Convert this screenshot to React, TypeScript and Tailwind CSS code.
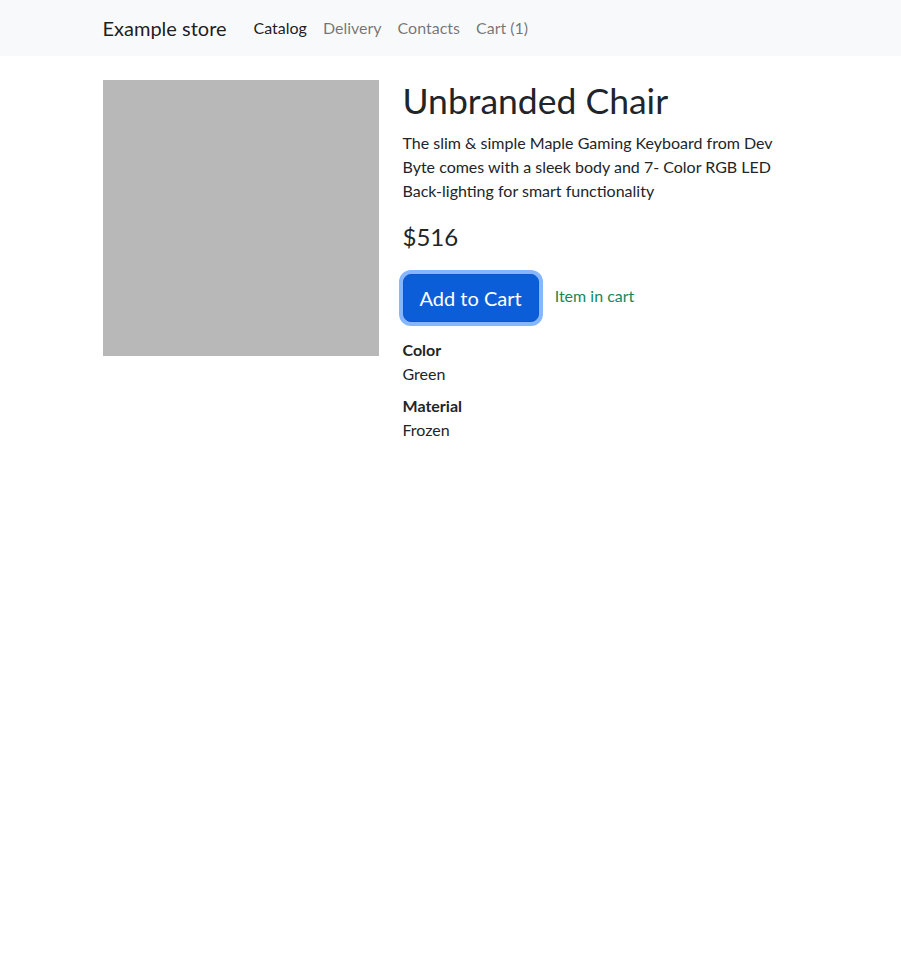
export default function App() {
  return (
    <div className="min-h-screen bg-white text-[#212529]" style={{ fontFamily: "Lato, 'Noto Sans', sans-serif" }}>
      <nav className="h-[56px] bg-[#f8f9fa] flex items-center">
        <div className="w-[720px] mx-auto px-3 flex items-center">
          <span className="text-[20px] leading-[30px] text-black/90 mr-[19px]">Example store</span>
          <ul className="flex items-center text-[16px] leading-[24px]">
            <li className="px-2 text-black/90">Catalog</li>
            <li className="px-2 text-black/55">Delivery</li>
            <li className="px-2 text-black/55">Contacts</li>
            <li className="px-2 text-black/55">Cart (1)</li>
          </ul>
        </div>
      </nav>
      <main className="w-[720px] mx-auto px-3 mt-6 flex gap-6 items-start">
        <div className="w-[276px] h-[276px] bg-[#b8b8b8] shrink-0" />
        <div className="w-[396px]">
          <h1 className="text-[35.5px] leading-[42.6px] font-normal mb-2">Unbranded Chair</h1>
          <p className="text-[16px] leading-[24px] mb-4">
            The slim &amp; simple Maple Gaming Keyboard from Dev Byte comes with a sleek body and 7- Color RGB LED Back-lighting for smart functionality
          </p>
          <p className="text-[24px] leading-[36px] mb-[19px]">$516</p>
          <div className="flex items-center">
            <button className="h-[48px] px-4 rounded-lg bg-[#0b5ed7] border border-[#0a58ca] text-white text-[20px] leading-[30px] shadow-[0_0_0_4px_rgba(13,110,253,0.5)]">
              Add to Cart
            </button>
            <span className="ml-4 text-[16px] leading-[24px] text-[#198754] -mt-[3px]">Item in cart</span>
          </div>
          <dl className="mt-4 text-[16px] leading-[24px]">
            <dt className="font-bold">Color</dt>
            <dd className="mb-2">Green</dd>
            <dt className="font-bold">Material</dt>
            <dd className="mb-2">Frozen</dd>
          </dl>
        </div>
      </main>
    </div>
  );
}
